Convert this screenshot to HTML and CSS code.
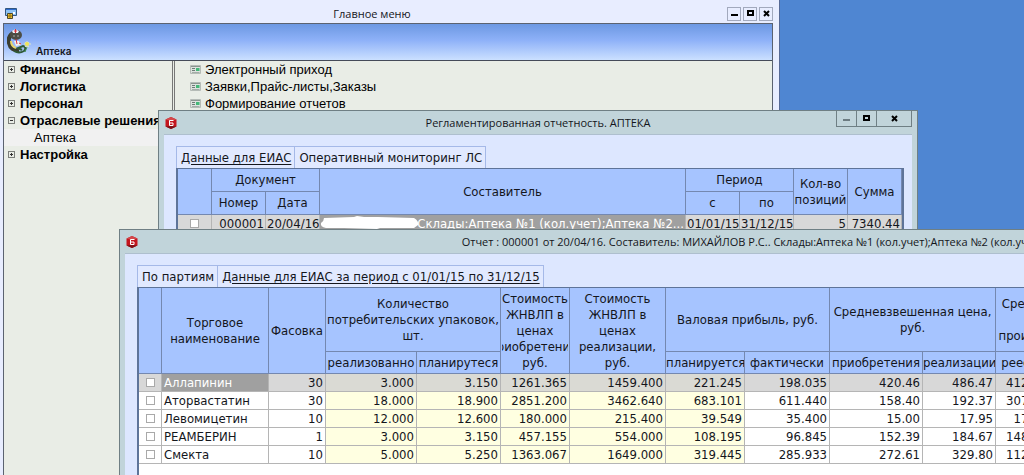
FILE: index.html
```html
<!DOCTYPE html>
<html lang="ru">
  <head>
    <meta charset="UTF-8" />
    <title>Главное меню</title>
    <meta name="viewport" content="width=device-width, initial-scale=1" />
    <link rel="stylesheet" href="styles.css">
  </head>
  <body>
    <svg class="sprite" aria-hidden="true">
      <symbol id="logo" viewBox="0 0 12 12">
        <path d="M6 0 11.5 2.5V9.5L6 12 .5 9.5V2.5z" fill="#c4161f" />
        <path d="M6 0 11.5 2.5 6 4 .5 2.5z" fill="#d4484c" />
        <path d="M.5 9.5 6 12 11.5 9.5 6 9z" fill="#7d1016" />
        <path d="M8.500 3.500H4.500V8.500H8V6H4.500" fill="none" stroke="#fff" stroke-width="1" />
      </symbol>
      <symbol id="form" viewBox="0 0 11 9">
        <path d="M.5.5h10v8H.5z" fill="#dde3de" stroke="#b5bbb6" />
        <path d="M1 1.5h9" stroke="#8a958f" />
        <path d="M2 3.5h3M2 5.5h3" stroke="#6d7a76" />
        <path d="M6 3h3.500v3H6z" fill="#45b878" />
        <path d="M2 7.500h7.500" stroke="#a4ada8" />
      </symbol>
      <symbol id="min" viewBox="0 0 9 9"><path d="M1 6h7" stroke="currentColor" stroke-width="2" /></symbol>
      <symbol id="max" viewBox="0 0 9 9"><path d="M2 2h5v4H2z" fill="none" stroke="currentColor" stroke-width="2" /></symbol>
      <symbol id="close" viewBox="0 0 9 9"><path d="M2 2l5 5M7 2 2 7" stroke="currentColor" stroke-width="2" /></symbol>
    </svg>

    <section class="window main-window">
      <header class="titlebar">
        <svg class="app-icon" viewBox="0 0 12 11">
          <path d="M.5.500h11v7H.5z" fill="#8fc3f5" stroke="#33567f" />
          <path d="M1 1.500h10" stroke="#2c6ad0" />
          <path d="M2.500 5.500h5v5h-5z" fill="#f2c530" stroke="#4f4a2a" />
          <path d="M8 4h2v2H8z" fill="#fff" />
          <path d="M5 6v4M3 8h4" stroke="#8a6a14" />
        </svg>
        <h1>Главное меню</h1>
        <div class="controls">
          <button aria-label="Свернуть"><svg><use href="#min" /></svg></button>
          <button aria-label="Развернуть"><svg><use href="#max" /></svg></button>
          <button aria-label="Закрыть"><svg><use href="#close" /></svg></button>
        </div>
      </header>
      <div class="frame">
        <div class="banner">
          <svg class="snake" viewBox="0 0 24 27">
            <path d="M8 4C3 6 1 10 2 15c1 5 5 8 10 7" fill="none" stroke="#3b3d30" stroke-width="4" />
            <path d="M4 13c0 4 2 6 5 7" fill="none" stroke="#e9d66a" stroke-width="2" />
            <ellipse cx="9" cy="7" rx="6" ry="5" fill="#4c4d45" />
            <path d="M5 3q3-3 7 0l-1 2H6z" fill="#eef2fb" />
            <path d="M8.500 1v4M7 3h3" stroke="#d8323c" />
            <path d="M6 8h2M10 8h2" stroke="#a8a9a3" />
            <path d="M7 13h5l2 4-5 1z" fill="#f4f1ea" />
            <path d="M9 11l1 5M12 15l2 1" stroke="#d8323c" />
            <path d="M7 23q5 3 10 0q3-4-1-5l-5 2 4 2" fill="none" stroke="#2f5a37" stroke-width="2" />
            <path d="M20 13v7M17 16h7M18 14l4 5M22 14l-4 5" stroke="#dfe9c8" />
            <circle cx="20" cy="16" r="2" fill="#efe45a" />
            <path d="M18 24l2-5" stroke="#3c8a4a" />
          </svg>
          <span>Аптека</span>
        </div>
        <div class="split">
          <nav class="tree">
            <a href="#"><i class="twist plus"></i>Финансы</a>
            <a href="#"><i class="twist plus"></i>Логистика</a>
            <a href="#"><i class="twist plus"></i>Персонал</a>
            <a href="#"><i class="twist"></i>Отраслевые решения</a>
            <a href="#" class="leaf">Аптека</a>
            <a href="#"><i class="twist plus"></i>Настройка</a>
          </nav>
          <nav class="items">
            <a href="#"><svg><use href="#form" /></svg>Электронный приход</a>
            <a href="#"><svg><use href="#form" /></svg>Заявки,Прайс-листы,Заказы</a>
            <a href="#"><svg><use href="#form" /></svg>Формирование отчетов</a>
          </nav>
        </div>
      </div>
    </section>

    <section class="window child list-window">
      <header class="titlebar">
        <svg class="logo"><use href="#logo" /></svg>
        <h2>Регламентированная отчетность. АПТЕКА</h2>
        <div class="controls">
          <button aria-label="Свернуть" class="dim"><svg><use href="#min" /></svg></button>
          <button aria-label="Развернуть"><svg><use href="#max" /></svg></button>
          <button aria-label="Закрыть" class="wide"><svg><use href="#close" /></svg></button>
        </div>
      </header>
      <div class="pane">
        <div class="tabs">
          <button class="active">Данные для ЕИАС</button>
          <button>Оперативный мониторинг ЛС</button>
        </div>
        <div class="grid-box">
          <table class="docs">
            <colgroup>
              <col class="w34"><col class="w54"><col class="w54"><col>
              <col class="w54"><col class="w54"><col class="w54"><col class="w54">
            </colgroup>
            <thead>
              <tr>
                <th rowspan="2"></th>
                <th colspan="2">Документ</th>
                <th rowspan="2">Составитель</th>
                <th colspan="2">Период</th>
                <th rowspan="2">Кол-во<br>позиций</th>
                <th rowspan="2">Сумма</th>
              </tr>
              <tr><th>Номер</th><th>Дата</th><th>с</th><th>по</th></tr>
            </thead>
            <tbody>
              <tr class="selected">
                <td class="check"><input type="checkbox" aria-label="Выбрать документ 000001"></td>
                <td>000001</td>
                <td>20/04/16</td>
                <td class="current author">
                  <svg class="smear" viewBox="0 0 99 13" preserveAspectRatio="none"><path d="M4 2 34 1 37 0 44 1 58 1 94 2Q99 5 98 9L94 12 60 12 57 13 24 12 6 12Q0 11 1 7Q4 5 4 2z" fill="#fff" /></svg>
                  Склады:Аптека №1 (кол.учет);Аптека №2...
                </td>
                <td>01/01/15</td>
                <td>31/12/15</td>
                <td>5</td>
                <td>7340.44</td>
              </tr>
            </tbody>
          </table>
        </div>
      </div>
    </section>

    <section class="window child report-window">
      <header class="titlebar">
        <svg class="logo"><use href="#logo" /></svg>
        <h2>Отчет : 000001 от 20/04/16. Составитель: МИХАЙЛОВ Р.С.. Склады:Аптека №1 (кол.учет);Аптека №2 (кол.уч...</h2>
      </header>
      <div class="pane">
        <div class="tabs">
          <button>По партиям</button>
          <button class="active">Данные для ЕИАС за период с 01/01/15 по 31/12/15</button>
        </div>
        <div class="grid-box">
          <table class="report">
            <colgroup>
              <col class="w23"><col class="w107"><col class="w57"><col class="w91"><col class="w84">
              <col class="w69"><col class="w96"><col class="w79"><col class="w85"><col class="w93">
              <col class="w73"><col class="w54"><col class="w79">
            </colgroup>
            <thead>
              <tr>
                <th rowspan="2"></th>
                <th rowspan="2">Торговое<br>наименование</th>
                <th rowspan="2">Фасовка</th>
                <th colspan="2">Количество<br>потребительских упаковок,<br>шт.</th>
                <th rowspan="2"><div class="clip"><span>Стоимость<br>ЖНВЛП в<br>ценах<br>приобретения,<br>руб.</span></div></th>
                <th rowspan="2">Стоимость<br>ЖНВЛП в<br>ценах<br>реализации,<br>руб.</th>
                <th colspan="2">Валовая прибыль, руб.</th>
                <th colspan="2">Средневзвешенная цена,<br>руб.</th>
                <th colspan="2">Средневзвешенная<br>цена<br>производителя, руб.</th>
              </tr>
              <tr>
                <th>реализованно</th>
                <th>планирутеся</th>
                <th>планируется</th>
                <th>фактически</th>
                <th>приобретения</th>
                <th>реализации</th>
                <th>реестр</th>
                <th>факт</th>
              </tr>
            </thead>
            <tbody>
              <tr class="selected">
                <td class="check"><input type="checkbox" aria-label="Аллапинин"></td>
                <td class="name current">Аллапинин</td><td>30</td>
                <td class="calc">3.000</td><td class="calc">3.150</td><td class="calc">1261.365</td><td class="calc">1459.400</td><td class="calc">221.245</td>
                <td>198.035</td><td>420.46</td><td>486.47</td><td>412.00</td><td></td>
              </tr>
              <tr>
                <td class="check"><input type="checkbox" aria-label="Аторвастатин"></td>
                <td class="name">Аторвастатин</td><td>30</td>
                <td class="calc">18.000</td><td class="calc">18.900</td><td class="calc">2851.200</td><td class="calc">3462.640</td><td class="calc">683.101</td>
                <td>611.440</td><td>158.40</td><td>192.37</td><td>307.00</td><td></td>
              </tr>
              <tr>
                <td class="check"><input type="checkbox" aria-label="Левомицетин"></td>
                <td class="name">Левомицетин</td><td>10</td>
                <td class="calc">12.000</td><td class="calc">12.600</td><td class="calc">180.000</td><td class="calc">215.400</td><td class="calc">39.549</td>
                <td>35.400</td><td>15.00</td><td>17.95</td><td>17.00</td><td></td>
              </tr>
              <tr>
                <td class="check"><input type="checkbox" aria-label="РЕАМБЕРИН"></td>
                <td class="name">РЕАМБЕРИН</td><td>1</td>
                <td class="calc">3.000</td><td class="calc">3.150</td><td class="calc">457.155</td><td class="calc">554.000</td><td class="calc">108.195</td>
                <td>96.845</td><td>152.39</td><td>184.67</td><td>148.00</td><td></td>
              </tr>
              <tr>
                <td class="check"><input type="checkbox" aria-label="Смекта"></td>
                <td class="name">Смекта</td><td>10</td>
                <td class="calc">5.000</td><td class="calc">5.250</td><td class="calc">1363.067</td><td class="calc">1649.000</td><td class="calc">319.445</td>
                <td>285.933</td><td>272.61</td><td>329.80</td><td>112.00</td><td></td>
              </tr>
            </tbody>
          </table>
        </div>
      </div>
    </section>
  </body>
</html>
```
FILE: styles.css
```css
* {
  box-sizing: border-box;
}
body {
  margin: 0;
  height: 100vh;
  position: relative;
  overflow: hidden;
  background: #4f86d2;
  color: #14161c;
  font-family: "DejaVu Sans Condensed", "Noto Sans", sans-serif;
  font-size: 13px;
}
a {
  color: inherit;
  text-decoration: none;
}
button {
  font: inherit;
  color: inherit;
  background: none;
  padding: 0;
  margin: 0;
}
.sprite {
  display: none;
}

/* windows */
.window {
  position: absolute;
  bottom: 0;
  display: flex;
  flex-direction: column;
}
.main-window {
  left: 0;
  top: 0;
  width: 780px;
  padding: 0 6px 0 3px;
  background: #e8edff;
  border-right: 1px solid #566a96;
}
.list-window {
  left: 158px;
  top: 110px;
  width: 760px;
}
.report-window {
  left: 119px;
  top: 229px;
  width: 1260px;
}
.child {
  padding: 0 5px;
  background: #c1d4da;
  border: 1px solid #6f7f84;
  border-bottom: 0;
}
.titlebar h1,
.titlebar h2 {
  margin: 0;
  font-family: "Open Sans", "Noto Sans", sans-serif;
  font-size: 11px;
  font-weight: 400;
  line-height: 16px;
  text-align: center;
  white-space: nowrap;
}
.controls {
  display: flex;
}
.controls button {
  display: flex;
  align-items: center;
  justify-content: center;
  color: #000;
}
.controls svg {
  width: 9px;
  height: 9px;
}
.main-window .titlebar {
  display: flex;
  align-items: center;
  height: 23px;
  padding: 4px 0 0 2px;
}
.main-window h1 {
  flex: 1;
}
.main-window .controls {
  gap: 2px;
}
.main-window .controls button {
  width: 14px;
  height: 14px;
  border: 1px solid #a2a9bd;
}
.app-icon {
  width: 12px;
  height: 11px;
}
.child .titlebar {
  display: grid;
  grid-template-columns: 1fr auto 1fr;
  align-items: center;
  height: 23px;
}
.child .controls {
  justify-self: end;
  align-self: start;
  border: 1px solid #6f7f84;
  border-top: 0;
}
.child .controls button {
  width: 20px;
  height: 15px;
  border: 0;
  border-right: 1px solid #6f7f84;
}
.child .controls .wide {
  width: 34px;
  border-right: 0;
}
.child .controls .dim {
  color: #6c7b81;
}
.logo {
  width: 12px;
  height: 12px;
  margin-left: 1px;
}

/* main menu */
.frame {
  flex: 1;
  display: flex;
  flex-direction: column;
  border: 1px solid #5b6270;
  border-bottom: 0;
}
.banner {
  display: flex;
  align-items: flex-end;
  gap: 5px;
  height: 37px;
  padding: 0 3px 3px;
  background: linear-gradient(#6c98e2, #8eb1f8 45%, #cbe0ff);
  border-bottom: 1px solid #454b59;
  font-family: Inter, "Liberation Sans", sans-serif;
  font-size: 10px;
  font-weight: 600;
  line-height: 12px;
}
.snake {
  width: 24px;
  height: 27px;
  margin-bottom: 2px;
}
.split {
  flex: 1;
  display: flex;
  background: #e9ede6;
  color: #000;
  font-family: "Liberation Sans", Arial, sans-serif;
  font-size: 13px;
}
.split a {
  display: flex;
  align-items: center;
  height: 17px;
  white-space: nowrap;
}
.tree {
  width: 171px;
  border-right: 3px double #777;
}
.tree a {
  gap: 5px;
  padding-left: 4px;
  font-weight: 700;
}
.tree .leaf {
  padding-left: 30px;
  background: #f1f1f1;
  font-weight: 400;
}
.twist {
  width: 7px;
  height: 7px;
  border: 1px solid #7c7f7b;
  background: linear-gradient(#333, #333) center / 3px 1px no-repeat;
}
.plus {
  background: linear-gradient(#333, #333) center / 3px 1px no-repeat,
    linear-gradient(#333, #333) center / 1px 3px no-repeat;
}
.items a {
  gap: 4px;
  padding-left: 15px;
}
.items svg {
  width: 11px;
  height: 9px;
}

/* tabs and grids */
.pane {
  flex: 1;
  display: flex;
  flex-direction: column;
  padding: 11px 8px 0 12px;
  background: #dde7ff;
  border-top: 1px solid #aebfce;
}
.tabs {
  display: flex;
}
.tabs button {
  height: 22px;
  padding: 0 3px 0 4px;
  border: 1px solid #a5b9e8;
  border-bottom: 0;
  background: #e1e9ff;
  line-height: 16px;
  white-space: nowrap;
}
.tabs button + button {
  border-left: 0;
}
.tabs .active {
  text-decoration: underline;
  text-underline-offset: 2px;
}
.grid-box {
  flex: 1;
  border: 1px solid #5e7499;
  border-width: 1px 2px 0;
  background: #fff;
}
table {
  width: 100%;
  table-layout: fixed;
  border-spacing: 0;
}
th,
td {
  padding: 0 2px;
  border-right: 1px solid #b5b5b5;
  border-bottom: 1px solid #b5b5b5;
  line-height: 16px;
  white-space: nowrap;
  overflow: hidden;
}
th {
  padding: 0;
  background: #a6c4ff;
  border-color: #7488b0;
  font-weight: 400;
}
td {
  height: 18px;
  text-align: right;
}
.docs thead tr {
  height: 23px;
}
.docs td {
  padding: 0 1px;
}
.report thead tr:first-child {
  height: 64px;
}
.report thead tr + tr {
  height: 22px;
}
.report {
  width: 990px;
}
.clip {
  display: flex;
  justify-content: center;
  margin: 0 1px;
  overflow: hidden;
}
.name {
  text-align: left;
}
.calc {
  background: #ffffe1;
}
.selected td {
  background: #d8d8d8;
}
.selected .calc {
  background: #dadad4;
}
.selected .current {
  background: #a0a0a0;
  color: #fff;
}
.author {
  position: relative;
}
.smear {
  position: absolute;
  left: 0;
  top: 1px;
  width: 99px;
  height: 13px;
}
.docs .check,
.check {
  padding: 0;
  text-align: center;
}
.check input {
  appearance: none;
  display: block;
  width: 9px;
  height: 9px;
  margin: 0 auto;
  border: 1px solid #a9a9a9;
  background: #fff;
}

.w23 { width: 23px; }
.w34 { width: 34px; }
.w54 { width: 54px; }
.w57 { width: 57px; }
.w69 { width: 69px; }
.w73 { width: 73px; }
.w79 { width: 79px; }
.w84 { width: 84px; }
.w85 { width: 85px; }
.w91 { width: 91px; }
.w93 { width: 93px; }
.w96 { width: 96px; }
.w107 { width: 107px; }
```
